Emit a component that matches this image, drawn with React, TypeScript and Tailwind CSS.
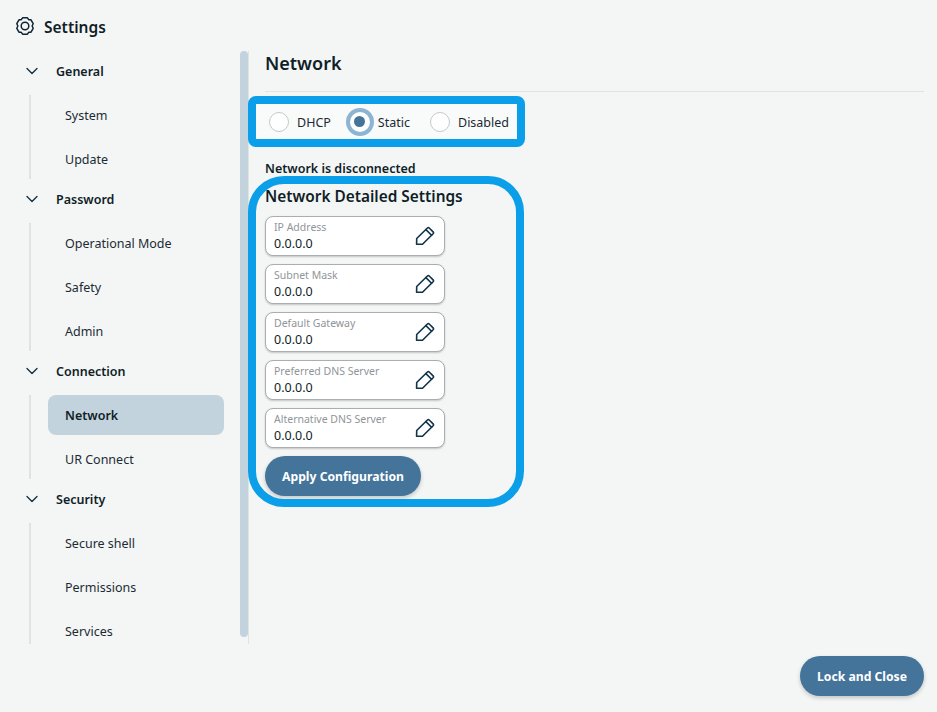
import { ChevronDown } from "lucide-react";

type Group = {
  title: string;
  items: string[];
};

const groups: Group[] = [
  { title: "General", items: ["System", "Update"] },
  { title: "Password", items: ["Operational Mode", "Safety", "Admin"] },
  { title: "Connection", items: ["Network", "UR Connect"] },
  { title: "Security", items: ["Secure shell", "Permissions", "Services"] },
];

const fields = [
  "IP Address",
  "Subnet Mask",
  "Default Gateway",
  "Preferred DNS Server",
  "Alternative DNS Server",
];

function GearIcon() {
  return (
    <svg width="20" height="20" viewBox="0 0 20 20" fill="none" stroke="#0f2532" strokeWidth="1.5" strokeLinejoin="round">
      <path d="M7.600 1.800h4.800l1.300 1.900 2.300.1 2.200 3.900-1.100 2.300 1.100 2.300-2.200 3.900-2.300.1-1.300 1.900H7.600l-1.300-1.900-2.300-.1-2.200-3.900L2.900 10 1.800 7.700 4 3.800l2.300-.1z" />
      <circle cx="10" cy="10" r="3.800" />
    </svg>
  );
}

function PencilIcon() {
  return (
    <svg width="20" height="20" viewBox="0 0 20 20" fill="none" stroke="#0f3347" strokeWidth="1.6" strokeLinejoin="round" strokeLinecap="round" className="shrink-0">
      <path d="M1.600 18.300l.1-5.800L12.400 2a1.300 1.300 0 0 1 1.800 0l3.900 3.900a1.300 1.300 0 0 1 0 1.800L7.500 18.200z" />
      <path d="M10.900 3.600l5.700 5.700" />
    </svg>
  );
}

function Radio({ label, checked }: { label: string; checked?: boolean }) {
  return (
    <div className="flex items-center">
      {checked ? (
        <div className="w-7 h-7 rounded-full bg-[#8db4d2] flex items-center justify-center">
          <div className="w-[20px] h-[20px] rounded-full bg-white flex items-center justify-center">
            <div className="w-[11px] h-[11px] rounded-full bg-[#44749a]"></div>
          </div>
        </div>
      ) : (
        <div className="w-5 h-5 rounded-full bg-white border border-[#c4c9cb]"></div>
      )}
      <span className={checked ? "ml-[4px] pt-[3px] text-[12.5px] text-[#1c2b33]" : "ml-[8px] pt-[3px] text-[12.5px] text-[#1c2b33]"}>{label}</span>
    </div>
  );
}

function Field({ label }: { label: string }) {
  return (
    <div className="w-[180px] h-10 bg-white border border-[#a9aeb0] rounded-lg shadow-[0_1px_2px_rgba(0,0,0,0.2)] flex items-center justify-between pl-2 pr-[9px]">
      <div className="flex flex-col">
        <span className="text-[10.5px] leading-[14px] text-[#8f9599]">{label}</span>
        <span className="text-[12.5px] leading-[18px] pt-px text-[#101e27]">0.0.0.0</span>
      </div>
      <PencilIcon />
    </div>
  );
}

export default function App() {
  return (
    <div className="relative w-[937px] h-[712px] overflow-hidden bg-[#f4f6f6] text-[#101e27] font-['Noto_Sans',sans-serif]">
      <div className="h-[51px] flex items-center pl-[15px] gap-[9px]">
        <GearIcon />
        <h1 className="text-[15.5px] font-semibold pt-[4px]">Settings</h1>
      </div>

      <div className="flex h-[593px]">
        <nav className="w-[240px] overflow-hidden">
          {groups.map((group) => (
            <div key={group.title}>
              <div className="h-10 flex items-center">
                <ChevronDown className="ml-[22px] w-[20px] h-[20px] text-[#0f3347]" strokeWidth={1.6} />
                <span className="ml-[14px] pt-[2px] text-[12.5px] font-semibold">{group.title}</span>
              </div>
              <div className="ml-[29px] border-l-2 border-[#dfe3e4] pl-[17px] w-[195px]">
                {group.items.map((item) => (
                  <div
                    key={item}
                    className={
                      item === "Network"
                        ? "mt-1 h-10 pl-[17px] pt-[2px] flex items-center rounded-lg bg-[#c2d3de] text-[12.5px] font-semibold"
                        : "mt-1 h-10 pl-[17px] pt-[2px] flex items-center rounded-lg text-[12.5px] text-[#1c2b33]"
                    }
                  >
                    {item}
                  </div>
                ))}
              </div>
            </div>
          ))}
        </nav>

        <div className="w-2 h-[586px] rounded-full bg-[#c2d3de]"></div>

        <main className="relative flex-1 border-l border-[#dfe3e4] pl-4 pr-[13px]">
          <div className="h-[41px] border-b border-[#dfe3e4]">
            <h2 className="text-[18px] leading-[24px] font-semibold">Network</h2>
          </div>

          <div className="mt-[4px] -ml-[17px] w-[277px] h-[51px] border-8 border-[#0a9fe8] rounded-[8px] bg-[#f9fafa] flex items-center pl-[13px]">
            <Radio label="DHCP" />
            <div className="ml-[15px]"><Radio label="Static" checked /></div>
            <div className="ml-[20px]"><Radio label="Disabled" /></div>
          </div>

          <p className="mt-[13px] text-[12.5px] leading-[18px] font-semibold">Network is disconnected</p>
          <h3 className="mt-[8px] text-[15.4px] leading-[22px] font-semibold">Network Detailed Settings</h3>

          <div className="mt-[8px] flex flex-col gap-2">
            {fields.map((field) => (
              <Field key={field} label={field} />
            ))}
          </div>

          <button className="mt-2 w-[156px] h-10 pt-[2px] rounded-full bg-[#44749a] text-white text-[12.2px] font-bold shadow-[0_2px_4px_rgba(0,0,0,0.2)]">
            Apply Configuration
          </button>

          <div className="absolute left-[-1px] top-[125px] w-[276px] h-[331px] border-8 border-[#0a9fe8] rounded-[36px] pointer-events-none"></div>
        </main>
      </div>

      <div className="flex justify-end pr-[13px] mt-3">
        <button className="w-[124px] h-10 pt-[2px] rounded-full bg-[#44749a] text-white text-[12.2px] font-bold shadow-[0_2px_4px_rgba(0,0,0,0.2)]">
          Lock and Close
        </button>
      </div>
    </div>
  );
}
